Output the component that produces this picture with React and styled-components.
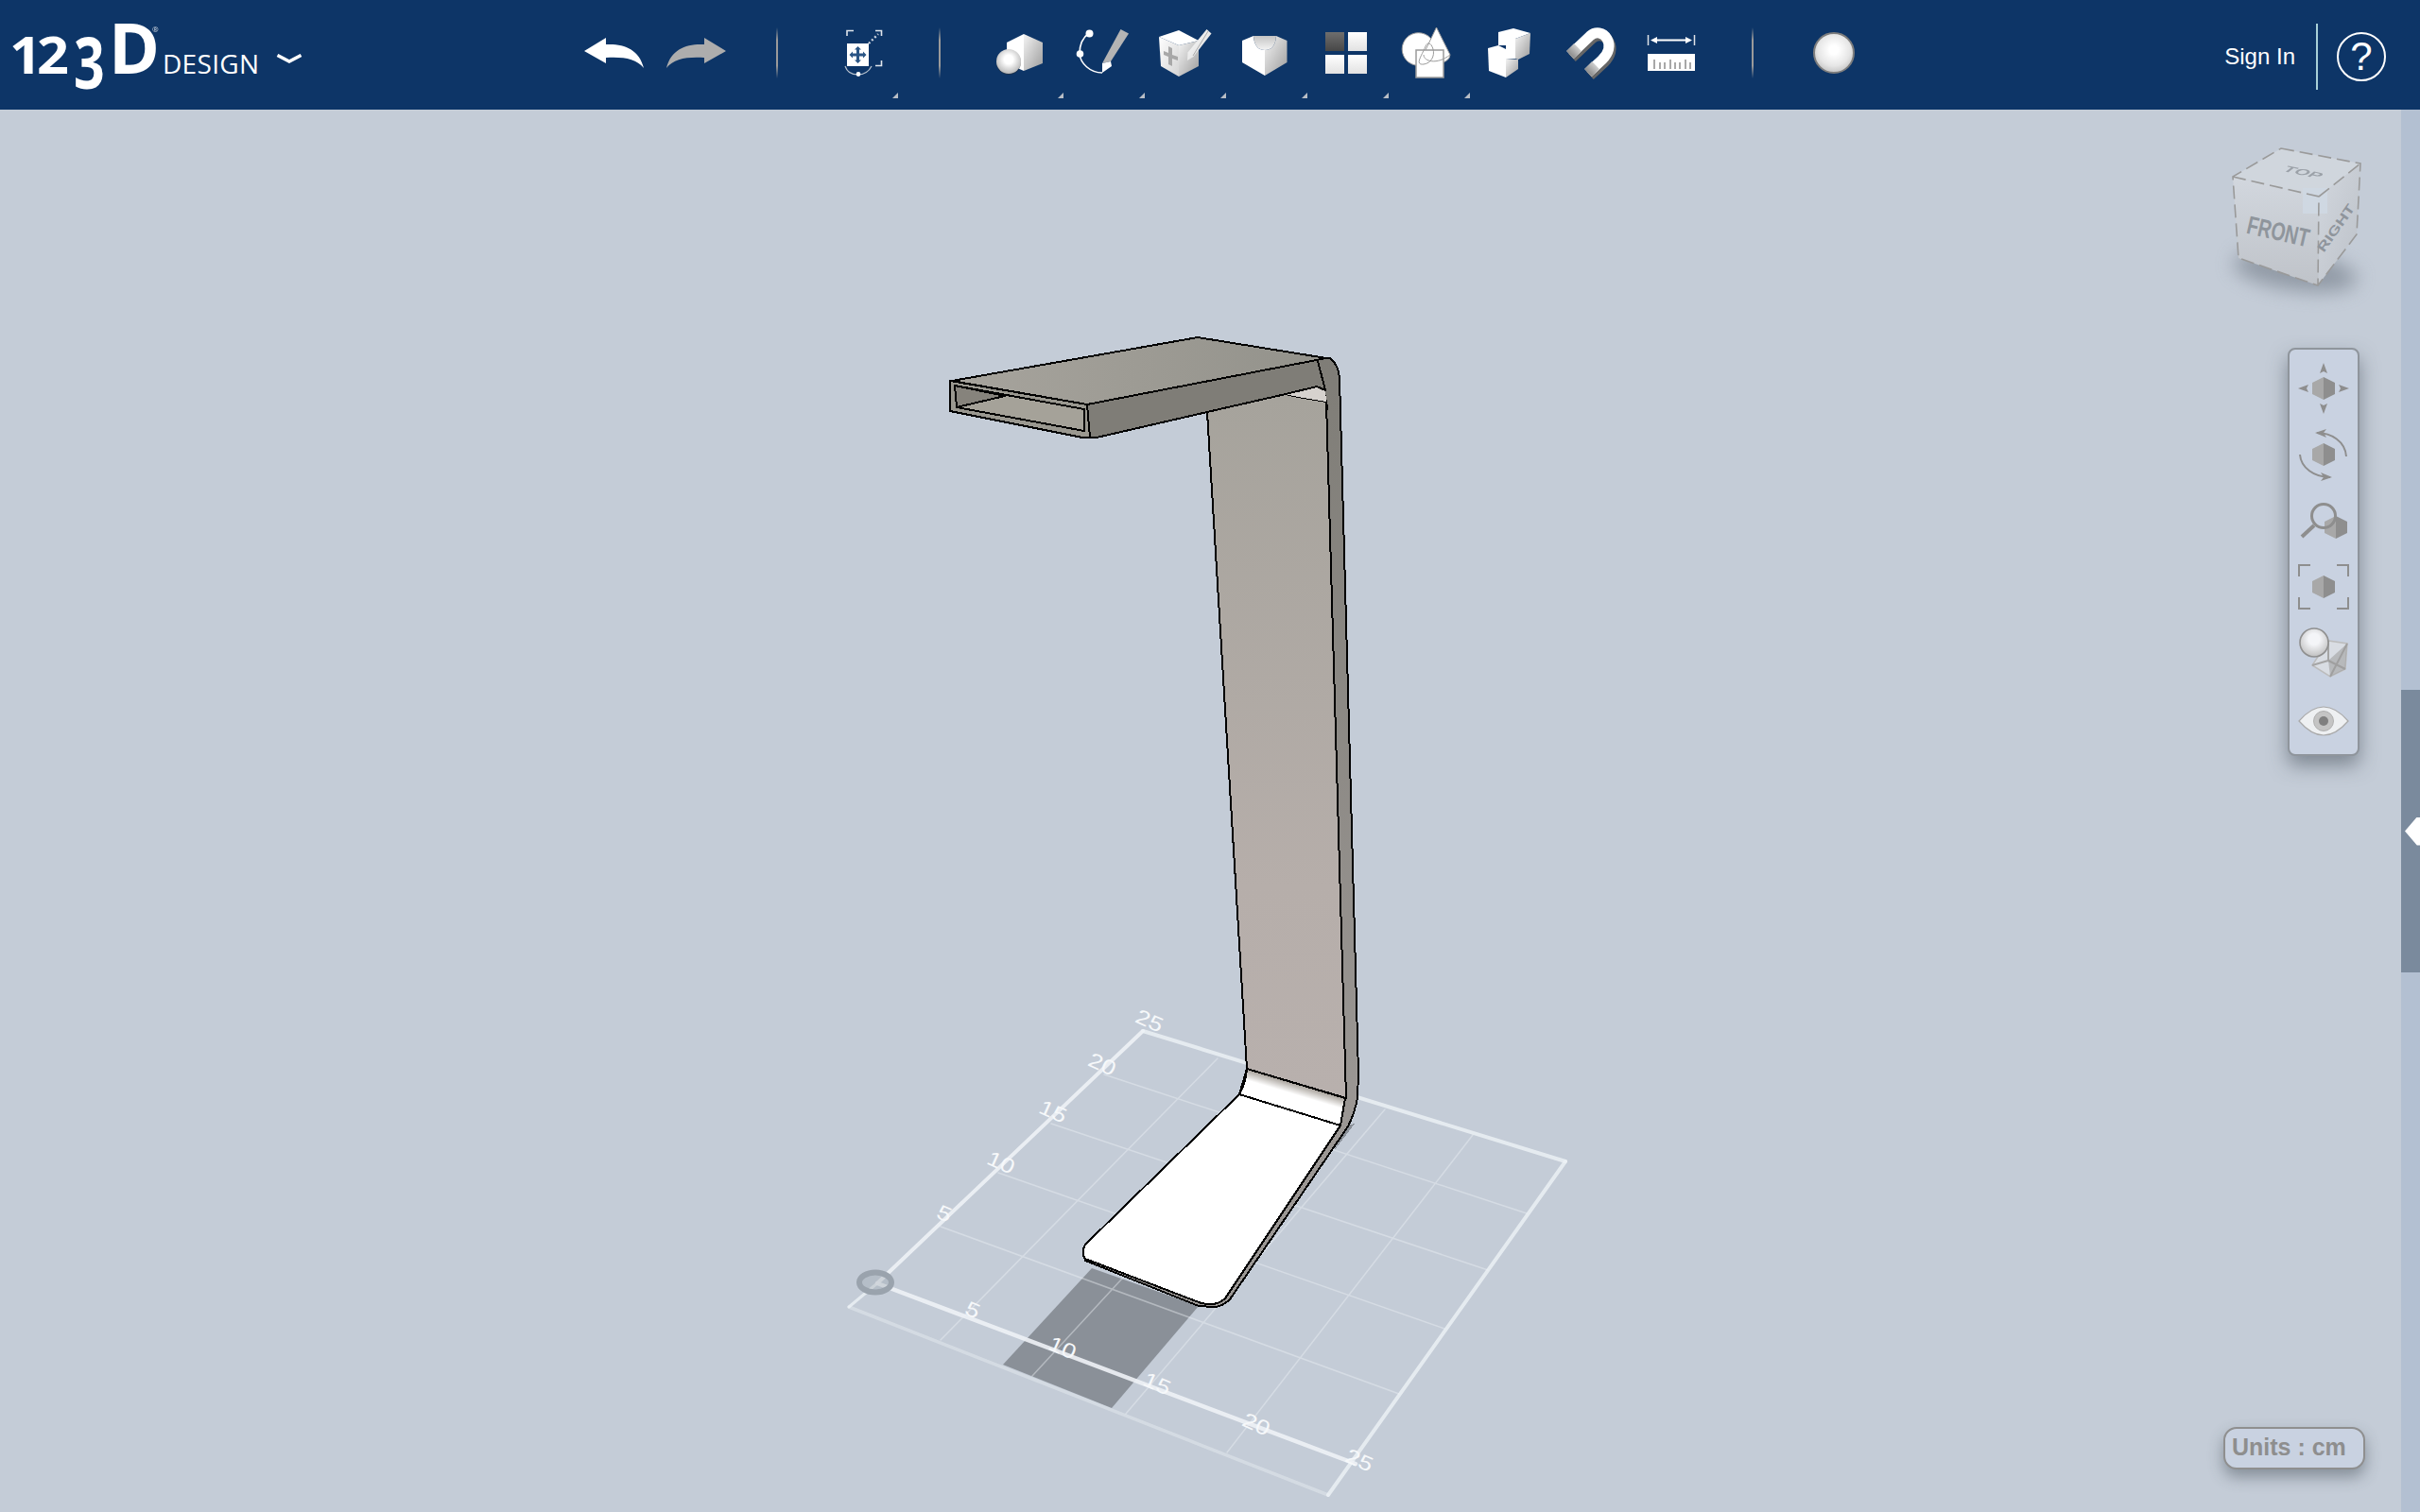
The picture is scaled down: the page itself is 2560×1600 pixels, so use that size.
import styled, { createGlobalStyle } from 'styled-components';

const GlobalStyle = createGlobalStyle`
  html, body {
    margin: 0;
    height: 100%;
    overflow: hidden;
    background: #c4ccd7;
  }
  #root {
    height: 100%;
  }
`;

const Page = styled.div`
  display: flex;
  flex-direction: column;
  height: 100%;
  font-family: 'Liberation Sans', Arial, sans-serif;
`;

const Header = styled.header`
  display: flex;
  align-items: center;
  flex-shrink: 0;
  height: 116px;
  padding-bottom: 4px;
  box-sizing: border-box;
  background: #0d3567;
  color: #fff;
`;

const Logo = styled.div`
  display: flex;
  align-items: baseline;
  flex-shrink: 0;
  box-sizing: border-box;
  width: 320px;
  padding-left: 10px;
  margin-bottom: 13px;
  font-family: 'Open Sans', sans-serif;
`;

const LogoDigit = styled.span`
  display: inline-block;
  width: ${p => p.$width}px;
  font-size: 53px;
  font-weight: 700;
  line-height: 1;
  transform-origin: 0 17%;
  transform: scale(${p => p.$sx || 1.12}, ${p => p.$sy || 1});
`;

const LogoD = styled.span`
  width: 46px;
  font-size: 73px;
  font-weight: 700;
  letter-spacing: -8px;
  line-height: 1;
`;

const Registered = styled.span`
  align-self: flex-start;
  width: 11px;
  margin-top: 14px;
  font-size: 8px;
  font-weight: 400;
  line-height: 1;
  opacity: 0.8;
`;

const LogoWord = styled.span`
  width: 120px;
  font-size: 28px;
  letter-spacing: 0.3px;
  line-height: 1;
`;

const Chevron = styled.svg`
  width: 28px;
  height: 11px;
  align-self: flex-start;
  margin-top: 44px;
`;

const History = styled.div`
  display: flex;
  gap: 24px;
  margin-left: 298px;
`;

const Separator = styled.div`
  flex-shrink: 0;
  width: 2px;
  height: 54px;
  margin-left: ${p => p.$left}px;
  background: linear-gradient(to bottom, rgba(170, 170, 170, 0), #9a9a9a 25%, #9a9a9a 75%, rgba(170, 170, 170, 0));
`;

const Tools = styled.div`
  display: flex;
  margin-left: ${p => p.$left}px;
`;

const ToolCell = styled.div`
  position: relative;
  display: flex;
  align-items: center;
  justify-content: center;
  flex-shrink: 0;
  width: ${p => p.$width || 86}px;
  height: 96px;
`;

const MenuMark = styled.span`
  position: absolute;
  right: -2px;
  bottom: 0;
  width: 6px;
  height: 6px;
  background: #b8bec6;
  clip-path: polygon(100% 0, 100% 100%, 0 100%);
`;

const ToolIcon = styled.svg`
  width: 64px;
  height: 64px;
  overflow: visible;
`;

const MaterialBall = styled.div`
  flex-shrink: 0;
  box-sizing: border-box;
  width: 44px;
  height: 44px;
  margin-left: 63px;
  border: 2px solid #7d7d7d;
  border-radius: 50%;
  background: radial-gradient(circle at 50% 42%, #fff 15%, #e6e6e6 55%, #a9a9a9 100%);
`;

const Account = styled.div`
  display: flex;
  align-items: center;
  margin-left: auto;
  margin-top: 7px;
  padding-right: 36px;
`;

const SignIn = styled.span`
  font-size: 24px;
  line-height: 1;
`;

const AccountRule = styled.div`
  width: 2px;
  height: 70px;
  margin: 0 20px 0 22px;
  background: #a8d0d8;
`;

const HelpButton = styled.div`
  display: flex;
  align-items: center;
  justify-content: center;
  box-sizing: border-box;
  width: 52px;
  height: 52px;
  border: 2px solid #fff;
  border-radius: 50%;
  font-size: 42px;
  line-height: 1;
`;

const Body = styled.main`
  display: flex;
  flex: 1;
  min-height: 0;
`;

const Viewport = styled.div`
  position: relative;
  flex: 1;
  background: #c4ccd7;
`;

const Scene = styled.svg`
  display: block;
  width: 100%;
  height: 100%;
`;

const GridLabel = styled.text`
  font-family: 'Liberation Sans', Arial, sans-serif;
  font-size: 23px;
  fill: #f6f8fa;
`;

const ViewCube = styled.svg`
  position: absolute;
  top: 24px;
  right: 10px;
  width: 190px;
  height: 190px;
  overflow: visible;
`;

const CubeLabel = styled.text`
  font-family: 'Liberation Sans', Arial, sans-serif;
  font-weight: 700;
  fill: #8f959c;
`;

const NavBar = styled.div`
  position: absolute;
  top: 252px;
  right: 44px;
  display: flex;
  flex-direction: column;
  box-sizing: border-box;
  width: 76px;
  height: 432px;
  padding-top: 6px;
  background: #c9d2e1;
  border: 2px solid #8f959c;
  border-radius: 8px;
  box-shadow: 0 10px 20px rgba(60, 70, 80, 0.5);
`;

const NavItem = styled.div`
  display: flex;
  align-items: center;
  justify-content: center;
  height: 70px;
`;

const NavIcon = styled.svg`
  width: 60px;
  height: 60px;
`;

const UnitsChip = styled.div`
  position: absolute;
  right: 38px;
  bottom: 45px;
  box-sizing: border-box;
  width: 150px;
  height: 45px;
  padding-left: 7px;
  background: #c9d2e1;
  border: 2px solid #8f8f8f;
  border-radius: 14px;
  box-shadow: 0 8px 16px rgba(60, 70, 80, 0.45);
  color: #8e8e8e;
  font-size: 25px;
  font-weight: 700;
  line-height: 39px;
  white-space: nowrap;
`;

const SideStrip = styled.aside`
  flex-shrink: 0;
  width: 20px;
  background: #b3c0d2;
`;

const SideTab = styled.div`
  display: flex;
  align-items: center;
  justify-content: flex-end;
  height: 299px;
  margin-top: 614px;
  background: #7a8a9d;
`;

const SideArrow = styled.div`
  width: 16px;
  height: 30px;
  background: #fff;
  clip-path: polygon(0 50%, 80% 0, 100% 0, 100% 100%, 80% 100%);
`;

const SharedDefs = styled.svg`
  position: absolute;
  width: 0;
  height: 0;
`;

const shapeArt = (
  <>
    <path d="M29 0L11 9V31L29 39Z" fill="#fff" />
    <path d="M29 0L49 9V31L29 39Z" fill="url(#faceGrey)" />
    <circle cx="13" cy="30" r="13" fill="#333" opacity="0.5" />
    <circle cx="13" cy="29" r="13" fill="url(#ball)" />
  </>
);

const sketchArt = (
  <>
    <path d="M13 4C6 9 3 18 3 26C4 36 14 46 27 46" fill="none" stroke="#fff" strokeWidth="1.6" />
    <circle cx="13.5" cy="4.5" r="4" fill="#fff" />
    <circle cx="3.5" cy="26" r="3.8" fill="#fff" />
    <path d="M46.5 0L55 4.5L36 34L27 36Z" fill="#b4b4b4" />
    <path d="M27 36L36 34L37 39L27 46Z" fill="#fff" />
  </>
);

const constructArt = (
  <>
    <path d="M21 1L42 12L21 17L0 8Z" fill="#fff" />
    <path d="M0 8L21 17V50L2 39Z" fill="url(#faceLight)" />
    <path d="M21 17L42 12V39L21 50Z" fill="url(#faceGrey)" />
    <path d="M10 18L14 20V27L20 29V33L14 31V39L10 37V29L5 27V23L10 25Z" fill="#a8a8a8" />
    <path d="M50.5 0L55.5 4.5L36.5 29L30 33L30.5 24.5Z" fill="url(#faceLight)" />
    <path d="M52 2L36 28" stroke="#aaa" strokeWidth="1" />
  </>
);

const modifyArt = (
  <>
    <path d="M12 0Q13 15 24 15V42L0 28V5Z" fill="#fff" />
    <path d="M36 0Q35 15 24 15V42L47.5 28V5Z" fill="url(#faceGrey)" />
    <path d="M12 0H36Q35 15 24 15Q13 15 12 0Z" fill="url(#notch)" />
  </>
);

const patternArt = (
  <>
    <rect width="20" height="20" fill="url(#tileDark)" />
    <rect x="24" width="20" height="20" fill="url(#tile)" />
    <rect y="24" width="20" height="20" fill="url(#tile)" />
    <rect x="24" y="24" width="20" height="20" fill="url(#tile)" />
  </>
);

const combineArt = (
  <g stroke="#9b9b9b" strokeWidth="1">
    <circle cx="18.5" cy="23" r="17.3" fill="#fff" />
    <path d="M37.5 0L23.5 29A14 9 0 0 0 52 29Z" fill="#fff" />
    <rect x="16" y="24" width="29" height="29" fill="#fff" strokeWidth="1.5" />
    <path d="M34 23C36 30 32 38 24 39C14 40 22 30 26 20C28 15 32 16 34 23Z M24 29C24 36 38 40 52 29" fill="none" />
  </g>
);

const groupArt = (
  <>
    <path d="M11 4L27 0L45 5L29 11L29 32L19 32V18L11 18Z" fill="#fff" />
    <path d="M29 11L45 5L44 27L32 33L29 32Z" fill="url(#faceGrey)" />
    <path d="M0 21L11 18L19 22V52L1 45Z" fill="#fff" />
    <path d="M19 32L32 33V43L19 52Z" fill="url(#faceGrey)" />
  </>
);

const magnetPath = 'M5 28L26 8C32 3 40 4 44 11C48 18 46 26 39 33L24 47';

const snapArt = (
  <>
    <path d={magnetPath} transform="translate(2 3)" fill="none" stroke="#666" strokeWidth="11" />
    <path d={magnetPath} fill="none" stroke="#fff" strokeWidth="11" />
    <path d="M5 28L13 20" fill="none" stroke="url(#tipGrey)" strokeWidth="11" />
    <path d="M24 47L32 39" fill="none" stroke="url(#tipGrey)" strokeWidth="11" />
  </>
);

const measureArt = (
  <>
    <path d="M0.5 0V11M49.5 0V11" stroke="#dfe3e8" strokeWidth="1.5" />
    <path d="M3 5.5L10 2V4.5H40V2L47 5.5L40 9V6.5H10V9Z" fill="#fff" />
    <rect y="20" width="50" height="18" fill="#fff" />
    <path d="M7 36V26M13 36V29M18 36V29M24 36V26M29 36V29M34 36V29M40 36V26M45 36V29" stroke="#a8a8a8" strokeWidth="2" />
  </>
);

const TOOLS = [
  { id: 'primitives', dx: -26, dy: -20, art: shapeArt, menu: true },
  { id: 'sketch', dx: -27, dy: -25, art: sketchArt, menu: true },
  { id: 'construct', dx: -26, dy: -25, art: constructArt, menu: true },
  { id: 'modify', dx: -24, dy: -18, art: modifyArt, menu: true },
  { id: 'pattern', dx: -22, dy: -22, art: patternArt, menu: true },
  { id: 'combine', dx: -28, dy: -27, art: combineArt, menu: true },
  { id: 'group', dx: -22, dy: -26, art: groupArt },
  { id: 'snap', dx: -26, dy: -26, art: snapArt },
  { id: 'measure', dx: -25, dy: -19, art: measureArt },
];

const UndoIcon = ({ color, flip }) => (
  <svg width="63" height="32" viewBox="0 0 63 32">
    <path
      d="M0 14L23 0V7C42 6 58 12 63 32C55 22 42 20 23 21V27Z"
      fill={color}
      transform={flip ? 'translate(63 0) scale(-1 1)' : undefined}
    />
  </svg>
);

const SelectIcon = () => (
  <svg width="44" height="54" viewBox="-6 -3 44 54">
    <path d="M0 6V0.5H7M30 0.5H36.5V6M36.5 32V37.5H30" fill="none" stroke="#dfe5ec" strokeWidth="1.6" />
    <path d="M23 14L33 4" stroke="#c9d2dd" strokeWidth="2.4" strokeDasharray="2 2.4" />
    <rect y="14" width="23" height="24" fill="#fff" />
    <path
      d="M11.5 17L15 20.5H13V24.5H17V22.5L20.5 26L17 29.5V27.5H13V31.5H15L11.5 35L8 31.5H10V27.5H6V29.5L2.5 26L6 22.5V24.5H10V20.5H8Z"
      fill="#2a5585"
    />
    <path d="M-2 38C2 50 20 50 26 38" fill="none" stroke="#b9c3cf" strokeWidth="1.2" />
    <circle cx="12" cy="46.5" r="2.4" fill="#fff" />
  </svg>
);

const HEX = { left: 'M0 -12L-12 -6V6L0 12Z', right: 'M0 -12L12 -6V6L0 12Z' };

const Hex = ({ x = 0, y = 0 }) => (
  <g transform={`translate(${x} ${y})`}>
    <path d={HEX.left} fill="#a8a8a8" />
    <path d={HEX.right} fill="#8e8e8e" />
  </g>
);

const navIcons = [
  <>
    <Hex />
    <path d="M0 -27L4 -16L0 -18L-4 -16Z M0 27L4 16L0 18L-4 16Z M-27 0L-16 -4L-18 0L-16 4Z M27 0L16 -4L18 0L16 4Z" fill="#8e8e8e" />
  </>,
  <>
    <Hex />
    <g fill="none" stroke="#8e8e8e" strokeWidth="2">
      <path d="M-7 -23C8 -23 23 -14 24 2" />
      <path d="M-25 0C-24 14 -10 24 7 24" />
    </g>
    <path d="M-9 -23L3 -27L0 -23L3 -18Z M9 24L-3 19L0 24L-3 28Z" fill="#8e8e8e" />
  </>,
  <>
    <Hex x={13} y={7} />
    <circle cy="-5" r="12.5" fill="none" stroke="#8e8e8e" strokeWidth="3" />
    <path d="M-10 5L-23 17" stroke="#8e8e8e" strokeWidth="4" />
  </>,
  <>
    <Hex />
    <path
      d="M-26 -11V-23H-14M14 -23H26V-11M26 11V23H14M-14 23H-26V11"
      fill="none"
      stroke="#8e8e8e"
      strokeWidth="2"
    />
  </>,
  <>
    <path d="M5 -13L25 -10L23 17L7 25L-12 13Z" fill="#d9dde3" stroke="#bcbcbc" strokeWidth="1.5" />
    <path d="M5 -13L5 8L-12 13M5 8L23 17M25 -10L7 25" fill="none" stroke="#a5a5a5" strokeWidth="2" />
    <path d="M25 -10L23 17L7 25L5 8Z" fill="#9a9a9a" opacity="0.55" />
    <circle cx="-10" cy="-11" r="15" fill="url(#navBall)" stroke="#8f8f8f" strokeWidth="1.6" />
  </>,
  <>
    <path d="M-26 2Q0 -28 26 2Q0 32 -26 2Z" fill="#eef0f2" stroke="#a9a9a9" strokeWidth="1.2" />
    <circle cy="2" r="10.5" fill="#c4c4c4" stroke="#b0b0b0" />
    <circle cy="2" r="5" fill="#7f7f7f" />
  </>,
];

const MINOR_LINES = [
  [1168, 1137, 1615, 1284],
  [1112, 1189, 1574, 1344],
  [1056, 1241, 1528, 1406],
  [995, 1298, 1480, 1475],
  [1288, 1120, 995, 1418],
  [1377, 1147, 1092, 1456],
  [1465, 1174, 1191, 1496],
  [1558, 1201, 1298, 1537],
];

const GRID_LABELS = [
  ['25', 1213, 1079],
  ['20', 1163, 1125],
  ['15', 1111, 1175],
  ['10', 1056, 1229],
  ['5', 996, 1283],
  ['5', 1026, 1385],
  ['10', 1121, 1425],
  ['15', 1221, 1463],
  ['20', 1326, 1506],
  ['25', 1435, 1544],
];

const Grid = () => (
  <g fill="none" stroke="#eef2f6" strokeLinecap="round">
    <path d="M1061 1444L1155 1342L1268 1382L1176 1490Z" fill="#8a9098" stroke="none" />
    <g strokeWidth="1.5" opacity="0.42">
      {MINOR_LINES.map(([x1, y1, x2, y2]) => (
        <line key={`${x1}-${y1}`} x1={x1} y1={y1} x2={x2} y2={y2} />
      ))}
    </g>
    <line x1="898" y1="1383" x2="1405" y2="1582" strokeWidth="3.5" opacity="0.4" />
    <line x1="898" y1="1383" x2="928" y2="1358" strokeWidth="3" opacity="0.8" />
    <line x1="928" y1="1358" x2="1209" y2="1091" strokeWidth="4" opacity="0.9" />
    <line x1="1209" y1="1091" x2="1656" y2="1229" strokeWidth="4" opacity="0.8" />
    <line x1="1656" y1="1229" x2="1405" y2="1582" strokeWidth="4" opacity="0.8" />
    <line x1="928" y1="1358" x2="1434" y2="1549" strokeWidth="4.5" opacity="0.9" />
    <ellipse cx="926" cy="1357" rx="17" ry="10.5" fill="#9aa3ad" fillOpacity="0.35" stroke="#9aa3ad" strokeWidth="6" />
    {GRID_LABELS.map(([label, x, y]) => (
      <GridLabel
        key={`${label}-${x}`}
        stroke="none"
        textAnchor="middle"
        transform={`translate(${x} ${y + 8}) rotate(24) scale(1.15 0.95)`}
      >
        {label}
      </GridLabel>
    ))}
  </g>
);

const Model = () => (
  <g stroke="#000" strokeWidth="2" strokeLinejoin="round" shapeRendering="crispEdges">
    <path d="M1411 1218L1433 1189L1426 1191Z" fill="#8a9098" stroke="none" />
    <path
      d="M1393 378L1407 379Q1416 386 1417 400L1437 1136L1436 1162Q1433 1178 1426 1192L1301 1375Q1293 1383 1283 1383L1268 1382L1148 1334L1146 1326L1311 1158L1319 1131L1404 430Z"
      fill="url(#rim)"
    />
    <path d="M1277 436L1360 417L1373 420L1403 425L1424 1162L1319 1131Z" fill="url(#stem)" />
    <path d="M1360 417L1393 409L1402 413L1403 425L1373 420Z" fill="#d6d2ce" stroke="none" />
    <path d="M1150 428L1393 378L1402 413L1393 409L1360 417L1277 436L1160 463L1153 463Z" fill="#7f7d77" />
    <path d="M1007 403L1267 357L1403 379L1150 428Z" fill="url(#topFace)" />
    <path d="M1005 403L1150 428L1153 463L1145 463L1005 435Z" fill="#9a9890" />
    <path d="M1010 408L1147 433V456L1012 431Z" fill="#a5a299" />
    <path d="M1010 408L1063 419L1012 431Z" fill="#86837c" />
    <path d="M1319 1131L1423 1162L1418 1191L1311 1158Q1318 1146 1319 1131Z" fill="url(#bend)" />
    <path d="M1311 1158L1148 1317Q1143 1326 1148 1332L1268 1378Q1285 1384 1296 1374L1418 1191Z" fill="#fff" />
  </g>
);

const CubeArt = () => (
  <>
    <ellipse cx="2428" cy="287" rx="66" ry="20" fill="#6f7985" opacity="0.6" filter="url(#cubeBlur)" transform="rotate(8 2428 287)" />
    <path d="M2413 157L2497 173L2453 208L2362 187Z" fill="#d0d6dd" />
    <path d="M2362 187L2453 208L2452 302L2368 273Z" fill="url(#cubeFront)" />
    <path d="M2453 208L2497 173L2493 248L2452 302Z" fill="url(#cubeSide)" />
    <path d="M2436 199H2462V226H2436Z" fill="#cfd8e2" />
    <path
      d="M2413 157L2497 173L2493 248L2452 302L2368 273L2362 187ZM2362 187L2453 208L2452 302M2453 208L2497 173"
      fill="none"
      stroke="#9a9a9a"
      strokeWidth="1.6"
      strokeDasharray="14 6"
    />
    <CubeLabel fontSize="27" textAnchor="middle" transform="translate(2408 254) rotate(13) scale(0.72 1)">
      FRONT
    </CubeLabel>
    <CubeLabel fontSize="15" textAnchor="middle" transform="translate(2433 185) rotate(12) skewX(-40) scale(1.3 0.65)" opacity="0.8">
      TOP
    </CubeLabel>
    <CubeLabel fontSize="22" textAnchor="middle" transform="translate(2475 244) rotate(-55) scale(0.85 0.62)">
      RIGHT
    </CubeLabel>
  </>
);

const App = () => (
  <Page>
    <GlobalStyle />
    <SharedDefs aria-hidden="true">
      <defs>
        <linearGradient id="faceGrey" x1="0" y1="0" x2="1" y2="1">
          <stop offset="0" stopColor="#f4f4f4" />
          <stop offset="1" stopColor="#9c9c9c" />
        </linearGradient>
        <linearGradient id="faceLight" x1="0" y1="0" x2="1" y2="1">
          <stop offset="0" stopColor="#fff" />
          <stop offset="1" stopColor="#d4d4d4" />
        </linearGradient>
        <linearGradient id="notch" x1="0" y1="0" x2="0" y2="1">
          <stop offset="0" stopColor="#c4c4c4" />
          <stop offset="1" stopColor="#f4f4f4" />
        </linearGradient>
        <linearGradient id="tile" x1="0" y1="0" x2="0" y2="1">
          <stop offset="0" stopColor="#fff" />
          <stop offset="1" stopColor="#e2e2e2" />
        </linearGradient>
        <linearGradient id="tileDark" x1="0" y1="0" x2="0" y2="1">
          <stop offset="0" stopColor="#6e6e6e" />
          <stop offset="1" stopColor="#474747" />
        </linearGradient>
        <linearGradient id="tipGrey" x1="0" y1="1" x2="1" y2="0">
          <stop offset="0" stopColor="#8c8c8c" />
          <stop offset="1" stopColor="#cfcfcf" />
        </linearGradient>
        <radialGradient id="ball" cx="0.5" cy="0.42" r="0.6">
          <stop offset="0.3" stopColor="#fff" />
          <stop offset="1" stopColor="#b4b4b4" />
        </radialGradient>
        <radialGradient id="navBall" cx="0.5" cy="0.38" r="0.65">
          <stop offset="0.3" stopColor="#f4f5f8" />
          <stop offset="1" stopColor="#bcbcbc" />
        </radialGradient>
        <linearGradient id="rim" gradientUnits="userSpaceOnUse" x1="0" y1="380" x2="0" y2="1190">
          <stop offset="0" stopColor="#7f7d77" />
          <stop offset="1" stopColor="#9b9794" />
        </linearGradient>
        <linearGradient id="stem" gradientUnits="userSpaceOnUse" x1="0" y1="420" x2="0" y2="1160">
          <stop offset="0" stopColor="#a6a39c" />
          <stop offset="0.7" stopColor="#b6aeaa" />
          <stop offset="1" stopColor="#b8b0ad" />
        </linearGradient>
        <linearGradient id="topFace" gradientUnits="userSpaceOnUse" x1="1007" y1="0" x2="1400" y2="0">
          <stop offset="0" stopColor="#a7a49d" />
          <stop offset="1" stopColor="#93928b" />
        </linearGradient>
        <linearGradient id="bend" gradientUnits="userSpaceOnUse" x1="1319" y1="1131" x2="1313" y2="1151">
          <stop offset="0" stopColor="#a59f98" />
          <stop offset="0.55" stopColor="#fff" />
        </linearGradient>
        <linearGradient id="cubeFront" x1="0" y1="0" x2="0" y2="1">
          <stop offset="0" stopColor="#d2d7de" />
          <stop offset="1" stopColor="#bfc3c9" />
        </linearGradient>
        <linearGradient id="cubeSide" x1="0" y1="0" x2="1" y2="1">
          <stop offset="0" stopColor="#d2d7de" />
          <stop offset="1" stopColor="#bcc1c8" />
        </linearGradient>
        <filter id="cubeBlur" x="-30%" y="-80%" width="160%" height="260%">
          <feGaussianBlur stdDeviation="10" />
        </filter>
      </defs>
    </SharedDefs>

    <Header>
      <Logo>
        <LogoDigit $width={29}>1</LogoDigit>
        <LogoDigit $width={39}>2</LogoDigit>
        <LogoDigit $width={37} $sx={1.08} $sy={1.42}>3</LogoDigit>
        <LogoD>D</LogoD>
        <Registered>®</Registered>
        <LogoWord>DESIGN</LogoWord>
        <Chevron viewBox="0 0 28 11">
          <path d="M1.5 1.5L14 8L26.5 1.5" fill="none" stroke="#fff" strokeWidth="3.5" />
        </Chevron>
      </Logo>

      <History>
        <UndoIcon color="#fff" />
        <UndoIcon color="#adadad" flip />
      </History>
      <Separator $left={53} />
      <Tools $left={53}>
        <ToolCell $width={72}>
          <SelectIcon />
          <MenuMark />
        </ToolCell>
      </Tools>
      <Separator $left={45} />
      <Tools $left={42}>
        {TOOLS.map(({ id, dx, dy, art, menu }) => (
          <ToolCell key={id}>
            <ToolIcon viewBox="-32 -32 64 64">
              <g transform={`translate(${dx} ${dy})`}>{art}</g>
            </ToolIcon>
            {menu && <MenuMark />}
          </ToolCell>
        ))}
      </Tools>
      <Separator $left={42} />
      <MaterialBall />

      <Account>
        <SignIn>Sign In</SignIn>
        <AccountRule />
        <HelpButton>?</HelpButton>
      </Account>
    </Header>

    <Body>
      <Viewport>
        <Scene viewBox="0 116 2540 1484" preserveAspectRatio="xMinYMin meet">
          <Grid />
          <Model />
        </Scene>
        <ViewCube viewBox="2340 140 190 190">
          <CubeArt />
        </ViewCube>
        <NavBar>
          {navIcons.map((icon, i) => (
            <NavItem key={i}>
              <NavIcon viewBox="-30 -30 60 60">{icon}</NavIcon>
            </NavItem>
          ))}
        </NavBar>
        <UnitsChip>Units : cm</UnitsChip>
      </Viewport>
      <SideStrip>
        <SideTab>
          <SideArrow />
        </SideTab>
      </SideStrip>
    </Body>
  </Page>
);

export default App;
